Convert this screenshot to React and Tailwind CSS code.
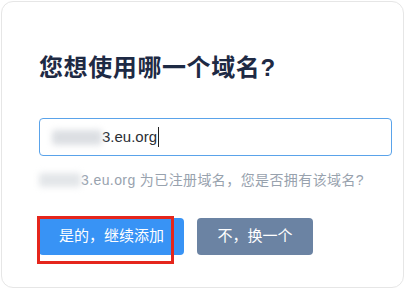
import React from "react";

export default function App() {
  return (
    <div
      className="w-[406px] h-[290px] bg-white p-[1px]"
      style={{ fontFamily: '"Liberation Sans", "Noto Sans CJK SC", sans-serif' }}
    >
      <div className="h-[287px] w-[403px] rounded-[12px] border border-[#e6e6e6] bg-white px-[37px] pt-[48px]">
        <h1 className="text-[24px] font-bold leading-[36px] text-[#1e2a44] tracking-[0.6px]">
          您想使用哪一个域名?
        </h1>
        <div className="mt-[32px] flex h-[38px] w-[353px] items-center rounded-[4px] border border-[#5aa3ea] px-[12px] text-[15px] text-[#2b2f36]">
          <div className="h-[15px] w-[50px] rounded-[3px] bg-[#dcdfe3] blur-[3px]" />
          <span>3.eu.org</span>
          <span className="ml-[1px] inline-block h-[20px] w-[1px] bg-[#222]" />
        </div>
        <div className="mt-[13px] flex items-center text-[14px] leading-[22px] tracking-[0.4px] text-[#98a2ae]">
          <div className="h-[14px] w-[42px] rounded-[3px] bg-[#e3e6e9] blur-[3px]" />
          <span>3.eu.org 为已注册域名，您是否拥有该域名?</span>
        </div>
        <div className="mt-[27px] flex gap-[13px]">
          <div className="relative">
            <button className="h-[37px] w-[145px] rounded-[4px] bg-[#3893f5] text-[15px] text-white">
              是的，继续添加
            </button>
            <div className="pointer-events-none absolute left-[-2px] top-[-2px] h-[48px] w-[137px] border-[3px] border-[#e5261c]" />
          </div>
          <button className="h-[37px] w-[116px] rounded-[4px] bg-[#6b83a3] text-[15px] text-white">
            不，换一个
          </button>
        </div>
      </div>
    </div>
  );
}
